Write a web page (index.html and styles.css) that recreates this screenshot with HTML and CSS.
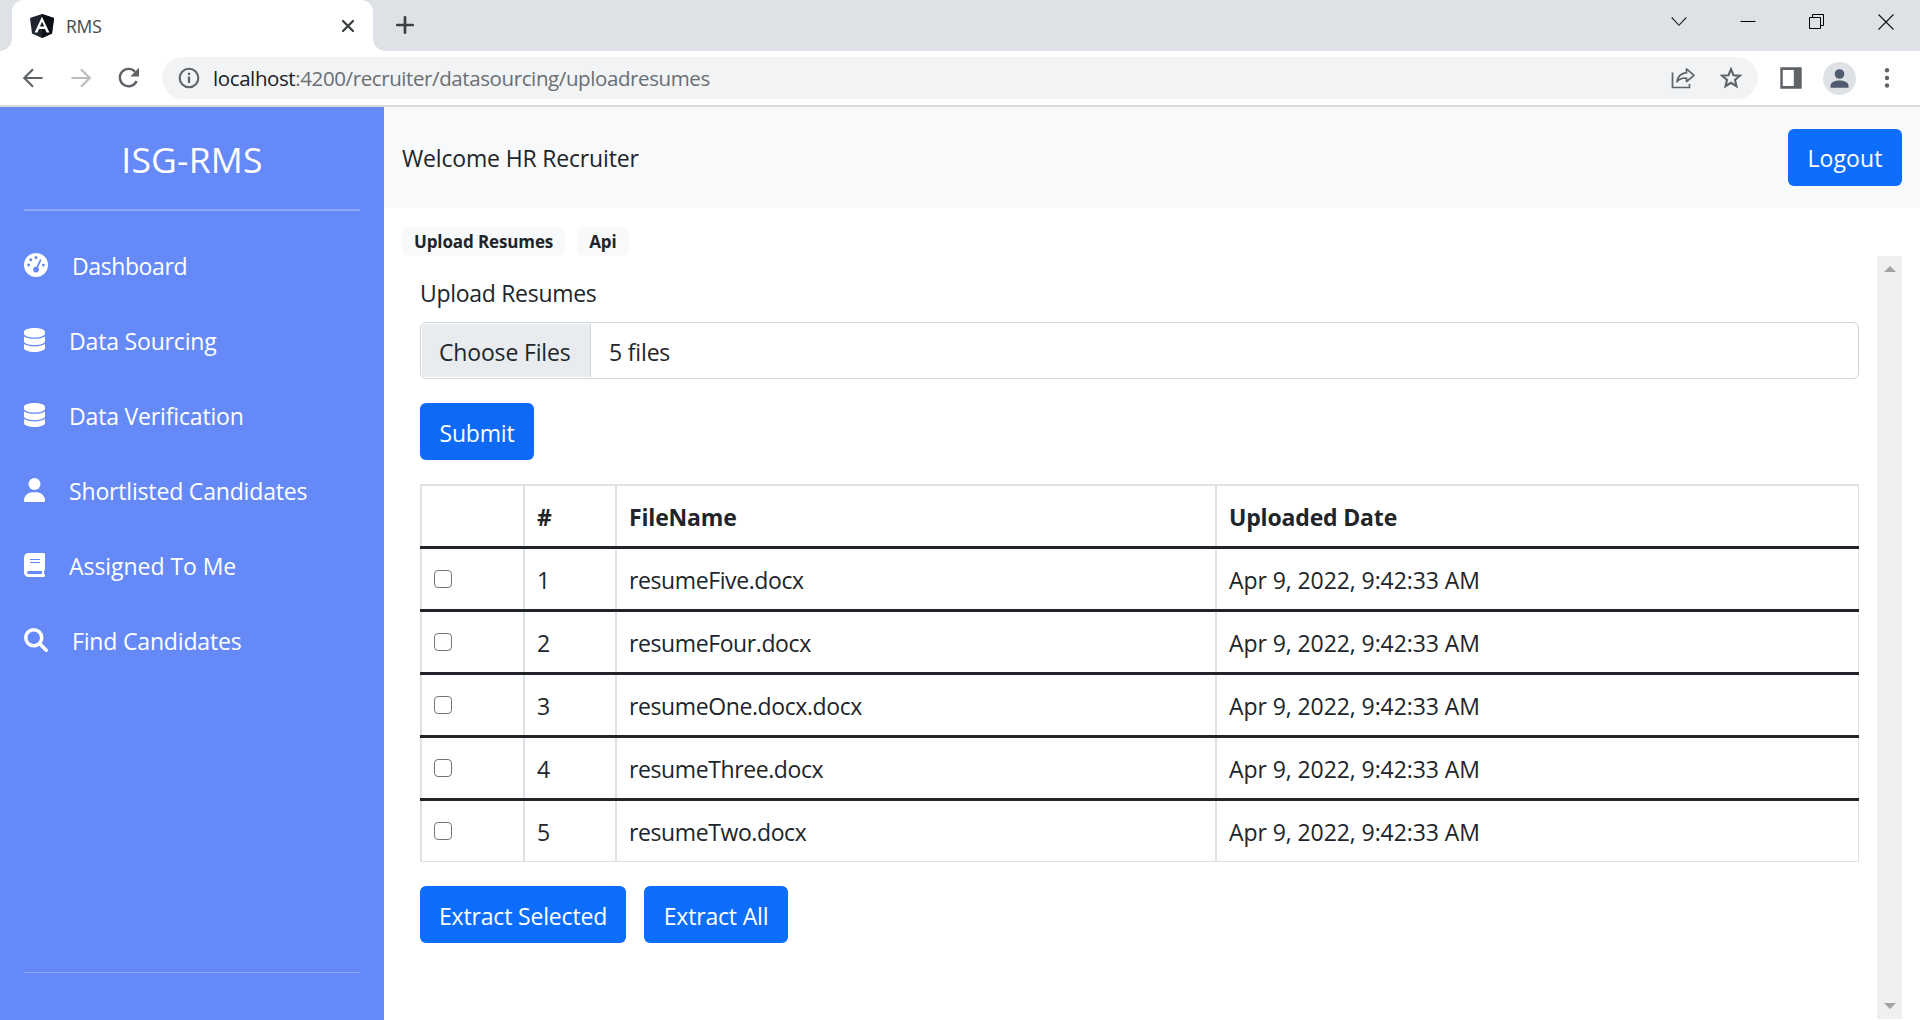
FILE: index.html
```html
<!DOCTYPE html>
<html lang="en">
<head>
<meta charset="utf-8">
<title>RMS</title>
<link rel="stylesheet" href="styles.css">
</head>
<body>
<div class="window">
  <div class="tabstrip">
    <div class="tab">
      <svg class="favicon" viewBox="0 0 24 24" width="24" height="24"><path d="M12 0 0 4l2 15.500L12 24l10-4.500L24 4z" fill="#1f2430"/><path d="M12 0v24l10-4.500L24 4z" fill="#0b0e14"/><path fill="#fff" fill-rule="evenodd" d="M12 2.800 4.600 18.600h2.900l1.500-3.700h6l1.500 3.700h2.900zM12 7.700l2.200 4.900H9.900z"/></svg>
      <span class="tab-title">RMS</span>
      <svg class="tab-close" viewBox="0 0 12 12" width="12" height="12"><path d="M1 1l10 10M11 1 1 11" stroke="#3c4043" stroke-width="2.300" stroke-linecap="round"/></svg>
    </div>
    <svg class="new-tab" viewBox="0 0 18 18" width="18" height="18"><path d="M9 1.300v15.400M1.300 9h15.400" stroke="#3c4043" stroke-width="2.700" stroke-linecap="round"/></svg>
    <div class="window-controls">
      <svg viewBox="0 0 16 16" width="16" height="16"><path d="M.7 3.500 8 11.300l7.300-7.800" fill="none" stroke="#222" stroke-width="1.100"/></svg>
      <svg viewBox="0 0 16 16" width="16" height="16"><path d="M.5 7.500h15" stroke="#000"/></svg>
      <svg viewBox="0 0 16 16" width="16" height="16"><path d="M.5 3.500h11v11H.5zM3.500 3.500v-3h11v11h-3" fill="none" stroke="#000"/></svg>
      <svg viewBox="0 0 16 16" width="16" height="16"><path d="M.5.5l15 15m0-15-15 15" stroke="#111" stroke-width="1.100"/></svg>
    </div>
  </div>
  <div class="toolbar">
    <svg class="nav-back" viewBox="0 0 20 20" width="20" height="20"><path d="M19.500 10H2M10 1.300 1.300 10l8.700 8.700" fill="none" stroke="#5f6368" stroke-width="2.200"/></svg>
    <svg class="nav-forward" viewBox="0 0 20 20" width="20" height="20"><path d="M.5 10H18M10 1.300l8.700 8.700-8.700 8.700" fill="none" stroke="#babcbe" stroke-width="2.200"/></svg>
    <svg class="nav-reload" viewBox="0 0 22 22" width="22" height="22"><path d="M18.600 14A8.700 8.700 0 1 1 17 4.700" fill="none" stroke="#5f6368" stroke-width="2.400"/><path d="M21 .8v8.700h-8.700z" fill="#5f6368"/></svg>
    <div class="omnibox">
      <svg class="info" viewBox="0 0 22 22" width="22" height="22"><circle cx="11" cy="11" r="9.300" fill="none" stroke="#5f6368" stroke-width="2.100"/><path d="M11 9.600v6.400M11 5.800v2.300" stroke="#5f6368" stroke-width="2.300"/></svg>
      <span class="url"><span class="host">localhost</span>:4200/recruiter/datasourcing/uploadresumes</span>
      <svg class="share" viewBox="0 0 24 22" width="24" height="22"><path d="M1.500 5.500v15h17V17" fill="none" stroke="#5f6368" stroke-width="1.700"/><path d="M15.500 1.900 23 8.300l-7.500 6.200v-3.500c-5-.2-7.700 1.100-9.500 3.900.7-5.300 3.700-8.500 9.500-9.200z" fill="none" stroke="#5f6368" stroke-width="1.700" stroke-linejoin="round"/></svg>
      <svg class="star" viewBox="0 0 22 22" width="22" height="22"><path d="M11 2.200l2.500 6 6.400.5-4.900 4.200 1.500 6.300L11 15.800l-5.500 3.400L7 12.900 2.100 8.700l6.400-.5z" fill="none" stroke="#5f6368" stroke-width="2.100"/></svg>
    </div>
    <svg class="side-panel" viewBox="0 0 22 22" width="22" height="22"><path fill="#5f6368" fill-rule="evenodd" d="M.3.300h21.400v21.400H.3zM2.800 3v16h11V3z"/></svg>
    <svg class="avatar" viewBox="0 0 33 33" width="33" height="33"><circle cx="16.500" cy="16.500" r="16.500" fill="#dee1e6"/><circle cx="16.500" cy="12" r="4.800" fill="#4f5b6f"/><path d="M7.500 25.700v-2c0-3.600 5-5.200 9-5.200s9 1.600 9 5.200v2z" fill="#4f5b6f"/></svg>
    <svg class="menu-dots" viewBox="0 0 6 22" width="6" height="22"><g fill="#5f6368"><circle cx="3" cy="3.300" r="2.200"/><circle cx="3" cy="11" r="2.200"/><circle cx="3" cy="18.500" r="2.200"/></g></svg>
  </div>

  <div class="page">
    <aside class="sidebar">
      <div class="brand"><span>ISG-RMS</span></div>
      <nav class="menu">
        <a class="menu-item"><svg class="icon wide" viewBox="0 0 24 24"><circle cx="12" cy="12" r="12" fill="#fff"/><g fill="#658af7"><circle cx="4.600" cy="12" r="1.500"/><circle cx="6.800" cy="6.700" r="1.500"/><circle cx="12" cy="4.600" r="1.500"/><circle cx="19.400" cy="12" r="1.500"/><circle cx="12" cy="16.600" r="2.900"/></g><path d="M12.300 16.200l4.200-9" stroke="#658af7" stroke-width="1.800" stroke-linecap="round"/></svg><span class="tight">Dashboard</span></a>
        <a class="menu-item"><svg class="icon" viewBox="0 0 21 24"><path fill="#fff" d="M21 3.800v2C21 7.800 16.300 9.600 10.500 9.600S0 7.800 0 5.800v-2C0 1.700 4.700 0 10.500 0S21 1.700 21 3.800zM21 8.500v4.800c0 2.100-4.700 3.900-10.500 3.900S0 15.400 0 13.300V8.500c2.300 1.600 6.300 2.300 10.500 2.300S18.700 10.100 21 8.500zM21 16v4.300c0 2-4.700 3.700-10.500 3.700S0 22.300 0 20.300V16c2.300 1.600 6.300 2.400 10.500 2.400S18.700 17.600 21 16z"/></svg><span>Data Sourcing</span></a>
        <a class="menu-item"><svg class="icon" viewBox="0 0 21 24"><path fill="#fff" d="M21 3.800v2C21 7.800 16.300 9.600 10.500 9.600S0 7.800 0 5.800v-2C0 1.700 4.700 0 10.500 0S21 1.700 21 3.800zM21 8.500v4.800c0 2.100-4.700 3.900-10.500 3.900S0 15.400 0 13.300V8.500c2.300 1.600 6.300 2.300 10.500 2.300S18.700 10.100 21 8.500zM21 16v4.300c0 2-4.700 3.700-10.500 3.700S0 22.300 0 20.300V16c2.300 1.600 6.300 2.400 10.500 2.400S18.700 17.600 21 16z"/></svg><span>Data Verification</span></a>
        <a class="menu-item"><svg class="icon" viewBox="0 0 21 24"><circle cx="10.500" cy="6" r="6" fill="#fff"/><path fill="#fff" d="M8.200 14.200h4.600c4.500 0 8.200 3.700 8.200 8.200 0 .9-.7 1.600-1.600 1.600H1.600C.7 24 0 23.300 0 22.400c0-4.500 3.700-8.200 8.200-8.200z"/></svg><span>Shortlisted Candidates</span></a>
        <a class="menu-item"><svg class="icon" viewBox="0 0 21 24"><path fill="#fff" fill-rule="evenodd" d="M21 16.500c0 .6-.4 1-.9 1.200v3.400c.5.200.9.600.9 1.400 0 .9-.6 1.500-1.500 1.500h-15A4.500 4.500 0 0 1 0 19.500v-15A4.500 4.500 0 0 1 4.500 0h15c.8 0 1.500.7 1.500 1.500zM6 6v1h10V6zm0 3v1h10V9zM4.500 18a1.500 1.500 0 0 0 0 3H18v-3z"/></svg><span class="loose">Assigned To Me</span></a>
        <a class="menu-item"><svg class="icon wide" viewBox="0 0 24 24"><circle cx="9.750" cy="9.750" r="8" fill="none" stroke="#fff" stroke-width="3.500"/><path d="M15.500 15.500l6.700 6.700" stroke="#fff" stroke-width="3.600" stroke-linecap="round"/></svg><span>Find Candidates</span></a>
      </nav>
      <div class="sidebar-end"></div>
    </aside>

    <main class="main">
      <header class="navbar">
        <span class="welcome">Welcome HR Recruiter</span>
        <button class="btn btn-logout">Logout</button>
      </header>
      <div class="badges">
        <span class="badge badge-upload">Upload Resumes</span>
        <span class="badge badge-api">Api</span>
      </div>
      <div class="scroller">
        <div class="content">
          <label class="label">Upload Resumes</label>
          <div class="file-input">
            <span class="file-button">Choose Files</span>
            <span class="file-value">5 files</span>
          </div>
          <button class="btn btn-submit">Submit</button>
          <table class="resumes">
            <colgroup><col class="c-check"><col class="c-num"><col class="c-name"><col class="c-date"></colgroup>
            <thead><tr><th></th><th>#</th><th>FileName</th><th>Uploaded Date</th></tr></thead>
            <tbody>
              <tr><td><input type="checkbox"></td><td>1</td><td class="name">resumeFive.docx</td><td class="date">Apr 9, 2022, 9:42:33 AM</td></tr>
              <tr><td><input type="checkbox"></td><td>2</td><td class="name">resumeFour.docx</td><td class="date">Apr 9, 2022, 9:42:33 AM</td></tr>
              <tr><td><input type="checkbox"></td><td>3</td><td class="name">resumeOne.docx.docx</td><td class="date">Apr 9, 2022, 9:42:33 AM</td></tr>
              <tr><td><input type="checkbox"></td><td>4</td><td class="name">resumeThree.docx</td><td class="date">Apr 9, 2022, 9:42:33 AM</td></tr>
              <tr><td><input type="checkbox"></td><td>5</td><td class="name">resumeTwo.docx</td><td class="date">Apr 9, 2022, 9:42:33 AM</td></tr>
            </tbody>
          </table>
          <div class="actions">
            <button class="btn btn-selected">Extract Selected</button>
            <button class="btn btn-all">Extract All</button>
          </div>
        </div>
        <div class="scrollbar">
          <svg viewBox="0 0 12 6" width="12" height="6"><path d="M0 6 6 0l6 6z" fill="#a3a3a3"/></svg>
          <svg viewBox="0 0 12 6" width="12" height="6"><path d="M0 0l6 6 6-6z" fill="#a3a3a3"/></svg>
        </div>
      </div>
    </main>
  </div>
</div>
</body>
</html>
```
FILE: styles.css
```css
* { box-sizing: border-box; }

body {
  margin: 0;
  font-family: "Open Sans", "Noto Sans", sans-serif;
  font-size: 23px;
  letter-spacing: -0.17px;
  line-height: 36px;
  color: #212529;
  background: #fff;
}

svg { display: block; flex: none; }

.window {
  display: flex;
  flex-direction: column;
  width: 1920px;
  height: 1020px;
  overflow: hidden;
}

/* Browser chrome */
.tabstrip {
  flex: none;
  display: flex;
  align-items: flex-start;
  height: 51px;
  padding-left: 12px;
  background: #dee1e6;
}

.tab {
  position: relative;
  display: flex;
  align-items: center;
  width: 361px;
  height: 51px;
  padding: 0 19px 0 18px;
  border-radius: 12px 12px 0 0;
  background: #fff;
}

.tab::before,
.tab::after {
  content: "";
  position: absolute;
  bottom: 0;
  width: 12px;
  height: 12px;
}

.tab::before {
  left: -12px;
  background: radial-gradient(circle at 0 0, transparent 11.5px, #fff 12px);
}

.tab::after {
  right: -12px;
  background: radial-gradient(circle at 100% 0, transparent 11.5px, #fff 12px);
}

.tab-title {
  flex: 1;
  margin-left: 12px;
  font-size: 17.5px;
  letter-spacing: -0.2px;
  color: #45484c;
}

.new-tab { margin: 16px 0 0 23px; }

.window-controls {
  display: flex;
  gap: 53px;
  margin: 14px 26px 0 auto;
}

.toolbar {
  flex: none;
  display: flex;
  align-items: center;
  height: 56px;
  padding: 0 30px 0 23px;
  border-bottom: 2px solid #d9dbdd;
}

.nav-forward { margin-left: 28px; }
.nav-reload { margin-left: 27px; }

.omnibox {
  flex: 1;
  display: flex;
  align-items: center;
  height: 42px;
  margin-left: 22px;
  padding: 0 16px 0 16px;
  border-radius: 21px;
  background: #f1f3f4;
}

.url {
  flex: 1;
  margin-left: 13px;
  font-size: 20.5px;
  letter-spacing: -0.4px;
  color: #6b6e72;
}

.host { color: #202124; }
.star { margin-left: 25px; }
.side-panel { margin-left: 22px; }
.avatar { margin-left: 21px; }
.menu-dots { margin-left: 28px; }

/* Application */
.page { flex: 1; display: flex; min-height: 0; }

.sidebar {
  flex: none;
  display: flex;
  flex-direction: column;
  width: 384px;
  padding: 0 24px;
  color: #fff;
  background: #658af7;
}

.brand {
  height: 104px;
  padding-top: 26px;
  border-bottom: 2px solid #8ea8f9;
  font-size: 35.5px;
  letter-spacing: 0.2px;
  line-height: 53px;
  text-align: center;
}

.menu { flex: 1; padding-top: 37px; }

.menu-item {
  display: flex;
  align-items: flex-start;
  height: 75px;
}

.icon { width: 21px; height: 24px; margin-top: 5px; }
.icon.wide { width: 24px; }
.menu-item span { margin-left: 24px; }
.tight { letter-spacing: -0.4px; }
.loose { letter-spacing: -0.05px; }
.sidebar-end { height: 48px; border-top: 1px solid #8ea8f9; }

.main { flex: 1; display: flex; flex-direction: column; min-width: 0; }

.navbar {
  flex: none;
  display: flex;
  align-items: center;
  justify-content: space-between;
  height: 101px;
  padding: 0 18px;
  background: #f8f9fa;
}

.btn {
  height: 57px;
  padding: 3px 0 0;
  border: 0;
  border-radius: 6px;
  font: inherit;
  letter-spacing: inherit;
  color: #fff;
  background: #0d6efd;
}

.btn-logout, .btn-submit { width: 114px; }
.btn-logout { padding-top: 1px; letter-spacing: 0.1px; }
.btn-selected { width: 206px; }
.btn-all { width: 144px; }

.badges { flex: none; display: flex; gap: 12px; padding: 19px 18px 0; }

.badge {
  height: 29px;
  padding: 0 12px;
  border-radius: 6px;
  background: #f8f9fa;
  font-size: 17px;
  font-weight: 700;
  letter-spacing: -0.12px;
  line-height: 30px;
}

.scroller {
  flex: 1;
  display: flex;
  min-height: 0;
  padding-right: 18px;
}

.content {
  flex: 1;
  padding: 19px 18px 0 36px;
}

.label { display: block; height: 47px; letter-spacing: -0.3px; }

.file-input {
  display: flex;
  height: 57px;
  padding: 1px;
  border: 1px solid #ced4da;
  border-radius: 6px;
  line-height: 57px;
}

.file-button {
  width: 169px;
  padding-left: 17px;
  border-right: 1px solid #ced4da;
  border-radius: 4px 0 0 4px;
  background: #e9ecef;
}

.file-value { margin-left: 18px; }
.btn-submit { display: block; margin-top: 24px; background: #0e6af5; }

.resumes {
  width: 1439px;
  margin-top: 24px;
  border-collapse: separate;
  border-spacing: 0;
  table-layout: fixed;
  border-top: 2px solid #dee2e6;
}

.c-check { width: 105px; }
.c-num { width: 92px; }
.c-name { width: 600px; }

th, td {
  height: 63px;
  padding: 1px 12px 0;
  border-bottom: 3px solid #212529;
  box-shadow: inset -2px 0 #dee2e6;
  text-align: left;
  vertical-align: middle;
}

th:first-child, td:first-child {
  padding-left: 14px;
  box-shadow: inset 2px 0 #dee2e6, inset -2px 0 #dee2e6;
}

th:last-child, td:last-child { box-shadow: inset -1px 0 #dee2e6; }
tbody tr:last-child td { border-bottom: 1px solid #dee2e6; height: 61px; }

.name { letter-spacing: -0.4px; }
.date { letter-spacing: -0.08px; }

input[type="checkbox"] {
  display: block;
  appearance: none;
  width: 18px;
  height: 18px;
  margin: 0 0 2px;
  border: 1.5px solid #767676;
  border-radius: 4px;
  background: #fff;
}

.actions { display: flex; gap: 18px; margin-top: 24px; }

.scrollbar {
  display: flex;
  flex-direction: column;
  align-items: center;
  justify-content: space-between;
  width: 25px;
  height: 763px;
  padding: 10px 0;
  background: #f0f0f0;
}
```
